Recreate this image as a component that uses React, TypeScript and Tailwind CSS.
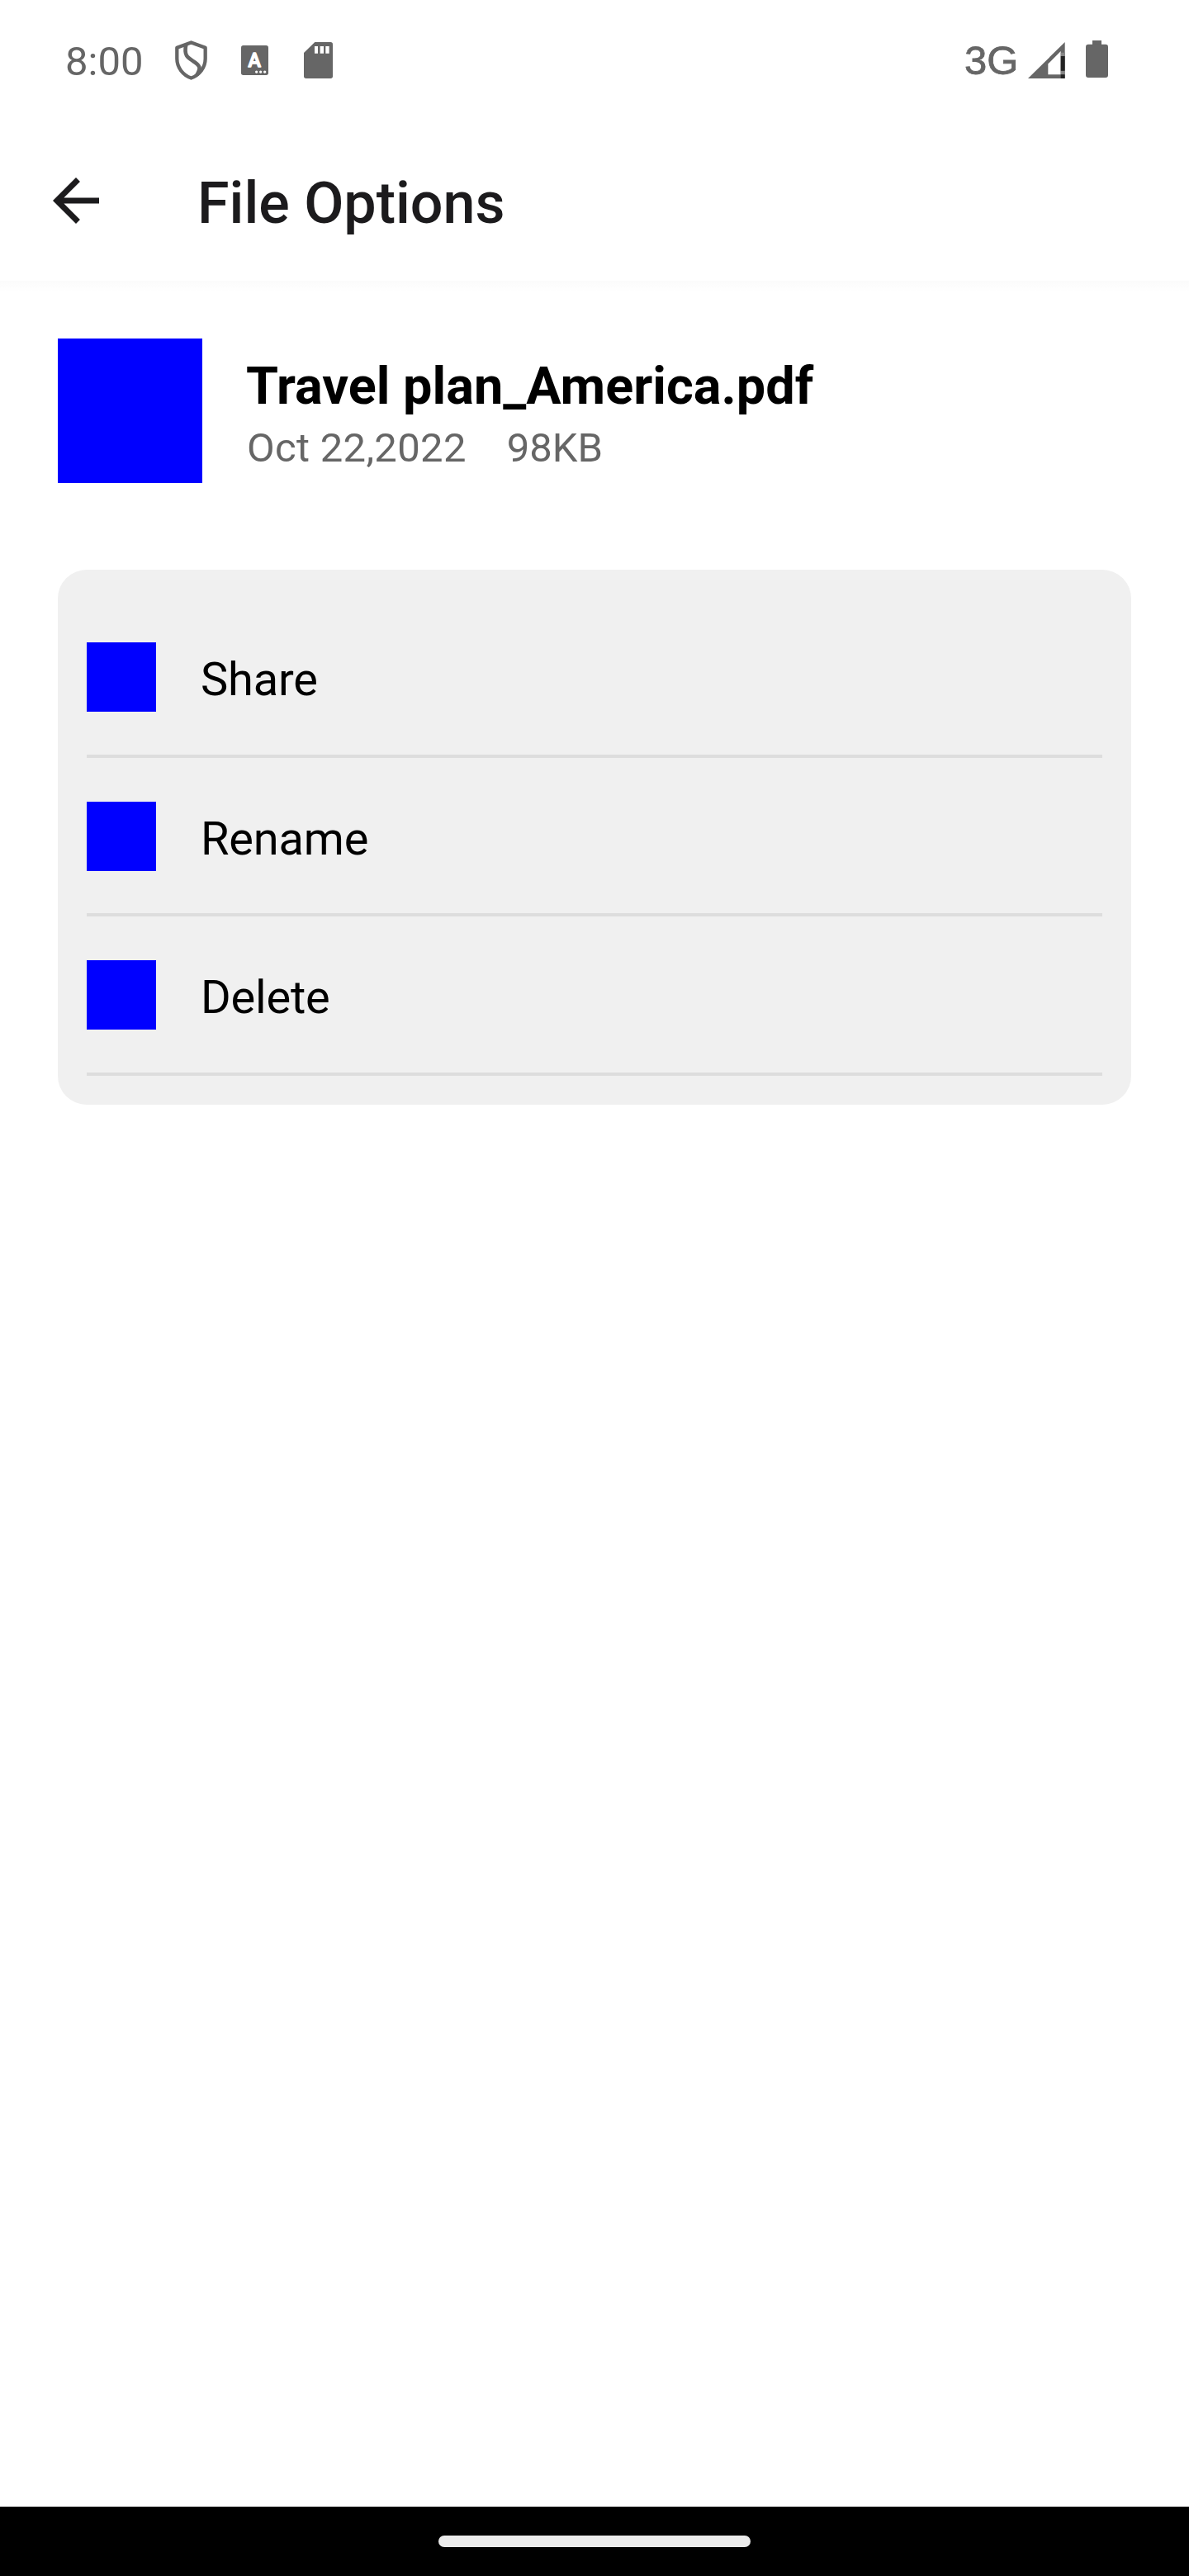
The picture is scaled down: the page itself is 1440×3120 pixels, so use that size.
const actions = [
  { label: "Share", height: "h-[193px]" },
  { label: "Rename", height: "h-[192px]" },
  { label: "Delete", height: "h-[193px]" },
];

function ShieldIcon() {
  return (
    <svg className="h-12 w-[39px]" viewBox="0 0 118 144" fill="none" stroke="#666" strokeLinejoin="round">
      <path strokeWidth="13" d="M59 7 111 26V66C111 100 88 127 59 137 30 127 7 100 7 66V26Z" />
      <path strokeWidth="14" d="M40 16C32 54 46 62 66 75 92 91 96 100 80 126" />
    </svg>
  );
}

function KeyboardIcon() {
  return (
    <svg className="h-9 w-[33px]" viewBox="0 0 99 109" preserveAspectRatio="none">
      <rect width="99" height="109" rx="8" fill="#666" />
      <text x="49" y="78" textAnchor="middle" fontSize="70" fontWeight="500" fill="#fff" stroke="#fff" strokeWidth="4" strokeLinejoin="round">A</text>
      <g fill="#fff">
        <circle cx="56" cy="97" r="5" />
        <circle cx="71" cy="97" r="5" />
        <circle cx="86" cy="97" r="5" />
      </g>
    </svg>
  );
}

function SdCardIcon() {
  return (
    <svg className="h-11 w-[35px]" viewBox="0 0 105 132">
      <path fill="#666" d="M40 0H97Q105 0 105 8V124Q105 132 97 132H8Q0 132 0 124V39Z" />
      <path fill="#fff" d="M39 15h12v26H39zM59 15h13v26H59zM79 15h13v26H79z" />
    </svg>
  );
}

function SignalIcon() {
  return (
    <svg className="h-11 w-[45px]" viewBox="0 0 135 132">
      <path fill="#666" d="M134 0V132H0Z" />
      <path fill="#fff" d="M73 79 119 33V118H73Z" />
      <path fill="#858585" d="M119 38h15v13h-15zM119 104h15v14h-15z" />
      <path fill="#222" d="M119 51h15v53h-15zM119 118h15v14h-15z" />
    </svg>
  );
}

function BatteryIcon() {
  return (
    <svg className="h-[45px] w-[27px]" viewBox="0 0 81 135" fill="#666">
      <path d="M24 0H57V20H24z" />
      <rect y="14" width="81" height="121" rx="9" />
    </svg>
  );
}

export default function App() {
  return (
    <div className="flex h-[3120px] w-[1440px] flex-col bg-white font-['Roboto',sans-serif] text-black">
      <div className="flex h-[146px] items-start pl-[79px] pr-[98px] text-[#666]">
        <span className="mt-[47px] w-[133px] text-[49px] leading-[56px]">8:00</span>
        <div className="mt-[49px]"><ShieldIcon /></div>
        <div className="ml-[41px] mt-[55px]"><KeyboardIcon /></div>
        <div className="ml-[43px] mt-[51px]"><SdCardIcon /></div>
        <span className="ml-auto mt-[44px] w-[77px] font-['Liberation_Sans',sans-serif] text-[49px] leading-[58px] [-webkit-text-stroke:0.8px_#666]">3G</span>
        <div className="mt-[51px]"><SignalIcon /></div>
        <div className="ml-[25px] mt-[49px]"><BatteryIcon /></div>
      </div>

      <header className="flex h-[194px] items-center pl-[50px]">
        <svg className="size-[84px]" viewBox="0 0 24 24" fill="#1c1b1d">
          <path d="M20 11H7.83l5.59-5.59L12 4l-8 8 8 8 1.41-1.41L7.83 13H20v-2z" />
        </svg>
        <h1 className="ml-[105px] mt-1.5 text-[70px] font-medium leading-[84px] text-[#1c1b1d]">File Options</h1>
      </header>
      <div className="h-[14px] bg-linear-to-b from-[#fbfbfb] to-white" />

      <main className="grow px-[70px] pt-14">
        <section className="flex">
          <div className="size-[175px] bg-[#0000ff]" />
          <div className="ml-[53px] flex flex-col gap-[9px] pt-5">
            <h2 className="text-[63px] font-bold leading-[75px]">Travel plan_America.pdf</h2>
            <p className="flex gap-[49px] pl-px text-[49px] leading-[58px] text-[#666]">
              <span className="tracking-[0.3px]">Oct 22,2022</span>
              <span>98KB</span>
            </p>
          </div>
        </section>

        <ul className="mt-[105px] rounded-[35px] bg-[#f0f0f0] p-[35px]">
          {actions.map(({ label, height }) => (
            <li key={label} className={`flex items-start border-b-4 border-[#dddddd] pt-[53px] ${height}`}>
              <div className="size-[84px] bg-[#0000ff]" />
              <span className="ml-[54px] mt-[3px] text-[56px] leading-[84px] tracking-[-0.2px]">{label}</span>
            </li>
          ))}
        </ul>
      </main>

      <footer className="flex h-[84px] items-center justify-center bg-black">
        <div className="h-[14px] w-[378px] rounded-full bg-[#ebebeb]" />
      </footer>
    </div>
  );
}
